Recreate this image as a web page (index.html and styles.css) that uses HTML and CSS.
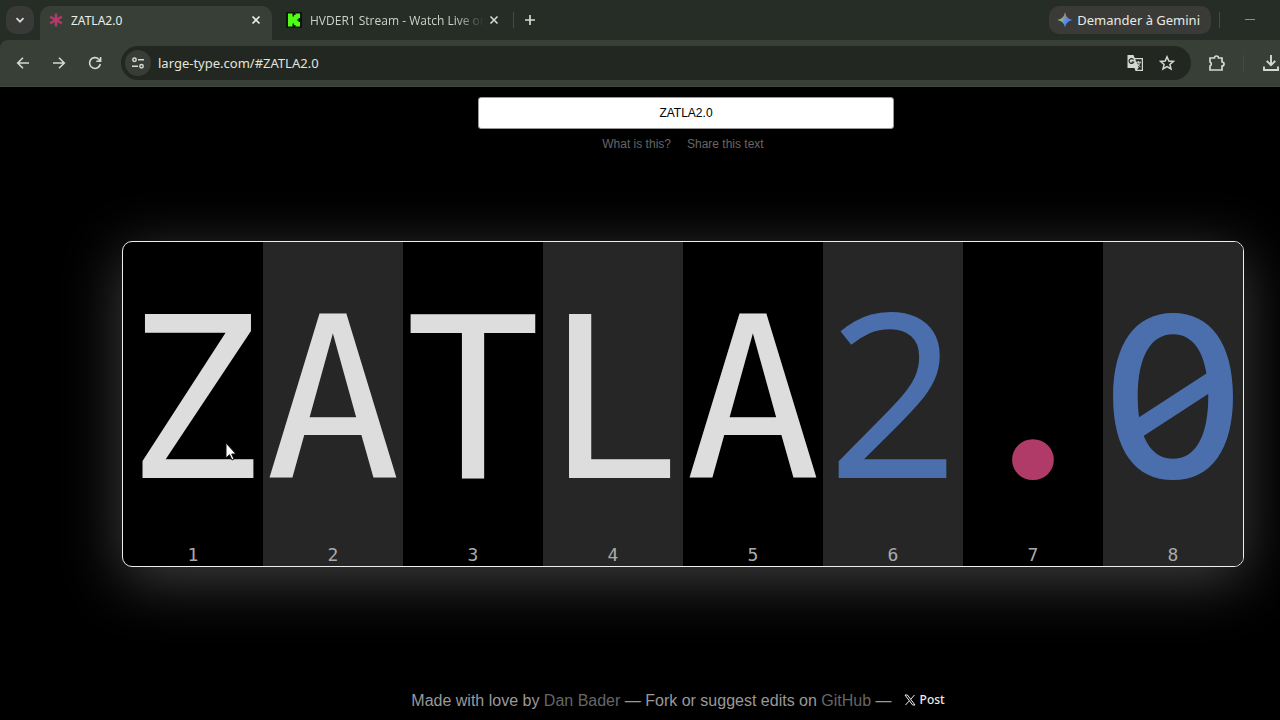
FILE: index.html
```html
<!DOCTYPE html>
<html lang="en">
<head>
<meta charset="utf-8">
<title>ZATLA2.0</title>
<link rel="stylesheet" href="styles.css">
</head>
<body>
<header class="browser">
  <div class="tabstrip">
    <button class="tab-search" aria-label="Search tabs"><svg width="12" height="12" viewBox="0 0 12 12"><path d="M2.5 4.2 6 7.7l3.500-3.500" fill="none" stroke="currentColor" stroke-width="1.800"/></svg></button>
    <div class="tab tab-active">
      <svg class="favicon" width="16" height="16" viewBox="0 0 16 16"><path d="M8 1.500v13M2.200 4.700l11.600 6.600M13.800 4.700 2.200 11.300" stroke="#b43a6c" stroke-width="2.400"/></svg>
      <span class="tab-title">ZATLA2.0</span>
      <button class="close" aria-label="Close tab"><svg width="10" height="10" viewBox="0 0 10 10"><path d="m1.500 1.500 7 7m0-7-7 7" stroke="currentColor" stroke-width="1.600"/></svg></button>
    </div>
    <div class="tab tab-idle">
      <svg class="favicon" width="16" height="16" viewBox="0 0 16 16"><path fill="#071807" d="M0 0h16v16H0z"/><path fill="#53fc18" d="M2 1.500h4.500v3H8V3h1.500V1.500H14V6h-1.500v1.500H11v1h1.500V10H14v4.500H9.500V13H8v-1.500H6.500v3H2z"/></svg>
      <span class="tab-title fade">HVDER1 Stream - Watch Live on</span>
      <button class="close" aria-label="Close tab"><svg width="10" height="10" viewBox="0 0 10 10"><path d="m1.500 1.500 7 7m0-7-7 7" stroke="currentColor" stroke-width="1.600"/></svg></button>
    </div>
    <span class="rule"></span>
    <button class="new-tab" aria-label="New tab"><svg width="12" height="12" viewBox="0 0 12 12"><path d="M6 1v10M1 6h10" stroke="currentColor" stroke-width="1.700"/></svg></button>
    <button class="gemini">
      <svg width="16" height="16" viewBox="0 0 16 16"><defs><linearGradient id="spark" x1="0" y1="0.200" x2="1" y2="0.600"><stop offset="0.100" stop-color="#e8bd4a"/><stop offset="0.350" stop-color="#79b88c"/><stop offset="0.600" stop-color="#5a86ee"/><stop offset="1" stop-color="#4c7df0"/></linearGradient><linearGradient id="warm" x1="0" y1="0" x2="0" y2="1"><stop offset="0" stop-color="#ef5b50"/><stop offset="0.450" stop-color="#ef5b50" stop-opacity="0"/></linearGradient></defs><path fill="url(#spark)" d="M8 .5C9 5 11 7 15.500 8 11 9 9 11 8 15.500 7 11 5 9 .5 8 5 7 7 5 8 .5z"/><path fill="url(#warm)" d="M8 .5C9 5 11 7 15.500 8 11 9 9 11 8 15.500 7 11 5 9 .5 8 5 7 7 5 8 .5z"/></svg>
      Demander à Gemini
    </button>
    <span class="rule"></span>
    <button class="minimize" aria-label="Minimize"><svg width="12" height="12" viewBox="0 0 12 12"><path d="M1 5.500h10" stroke="currentColor"/></svg></button>
  </div>
  <div class="toolbar">
    <button class="tool" aria-label="Back"><svg width="16" height="16" viewBox="0 0 16 16"><path d="M14 8H3M8 2.700 2.700 8 8 13.300" fill="none" stroke="currentColor" stroke-width="1.600"/></svg></button>
    <button class="tool" aria-label="Forward"><svg width="16" height="16" viewBox="0 0 16 16"><path d="M2 8h11M8 2.700 13.300 8 8 13.300" fill="none" stroke="currentColor" stroke-width="1.600"/></svg></button>
    <button class="tool" aria-label="Reload"><svg width="16" height="16" viewBox="0 0 16 16"><path d="M13.300 9a5.400 5.400 0 1 1-1.500-4.800L13.500 6M13.600 2v4.300H9.300" fill="none" stroke="currentColor" stroke-width="1.600"/></svg></button>
    <div class="omnibox">
      <button class="site-info" aria-label="Site information"><svg width="14" height="14" viewBox="0 0 14 14"><g fill="none" stroke="currentColor" stroke-width="1.500"><circle cx="3.500" cy="3.800" r="1.700"/><path d="M7 3.800h6M1 10.200h6"/><circle cx="10.500" cy="10.200" r="1.700"/></g></svg></button>
      <input class="address" type="text" value="large-type.com/#ZATLA2.0" aria-label="Address">
      <button class="box-tool" aria-label="Translate this page"><svg width="18" height="18" viewBox="0 0 18 18"><path fill="currentColor" d="M1.500 1h6l1.200 3H17v13H9.500l-1-3h-7z"/><path fill="#222821" d="M9.200 5.200h6.600v10.600h-5l2-2-3.600-8.600z"/><path d="M7.500 5.700A2.400 2.400 0 1 0 7.700 8H5.500" fill="none" stroke="#222821" stroke-width="1.200"/><path d="M9.800 8.200h5.400M12.400 7v1.200c0 2-1.200 3.300-2 4M11 9.500l3.500 3.700M14.200 8.300c-.3 1.700-1.200 3-2.500 4" fill="none" stroke="currentColor"/></svg></button>
      <button class="box-tool" aria-label="Bookmark this page"><svg width="16" height="16" viewBox="0 0 16 16"><path d="m8 1.800 1.800 4.200 4.600.4-3.500 3 1.100 4.500-4-2.400-4 2.400 1.100-4.500-3.500-3L6.200 6z" fill="none" stroke="currentColor" stroke-width="1.500"/></svg></button>
    </div>
    <button class="tool extensions" aria-label="Extensions"><svg width="18" height="18" viewBox="0 0 18 18"><path d="M2 4h4.500a2 2 0 0 1 4 0H14v4a2 2 0 0 1 0 4v4H2v-4a2.200 2.200 0 0 0 0-4z" fill="none" stroke="currentColor" stroke-width="1.700"/></svg></button>
    <span class="rule"></span>
    <button class="download" aria-label="Downloads"><svg width="18" height="18" viewBox="0 0 18 18"><path d="M9 1v10M4.700 6.800 9 11.200l4.300-4.400M2 12.500V16h14v-3.500" fill="none" stroke="currentColor" stroke-width="1.900"/></svg></button>
  </div>
</header>
<div class="page">
  <form class="search">
    <input class="text-input" type="text" value="ZATLA2.0" aria-label="Text to display">
    <nav class="links"><a href="#about">What is this?</a><a href="#share">Share this text</a></nav>
  </form>
  <main class="stage">
    <ol class="chars">
      <li class="cell"><span class="char">Z</span><span class="num">1</span></li>
      <li class="cell"><span class="char">A</span><span class="num">2</span></li>
      <li class="cell"><span class="char">T</span><span class="num">3</span></li>
      <li class="cell"><span class="char">L</span><span class="num">4</span></li>
      <li class="cell"><span class="char">A</span><span class="num">5</span></li>
      <li class="cell"><span class="char digit"><span class="two">2</span></span><span class="num">6</span></li>
      <li class="cell"><span class="char symbol"><span class="dot">.</span></span><span class="num">7</span></li>
      <li class="cell"><span class="char digit slashed"><span class="zero">0</span></span><span class="num">8</span></li>
    </ol>
  </main>
  <footer class="footer">
    <p class="credit">Made with love by <a href="#author">Dan Bader</a> — Fork or suggest edits on <a href="#github">GitHub</a> —</p>
    <a class="post" href="#post"><svg width="12" height="12" viewBox="0 0 12 12"><path d="M1 1h2.400L11 11H8.600zM10.500 1 6.700 5.300M5.300 6.900 1.500 11" fill="none" stroke="currentColor"/></svg>Post</a>
  </footer>
</div>
<svg class="cursor" width="13" height="20" viewBox="0 0 13 20"><path d="M1 1v15l3.500-3.300L7 18l2-1-2.300-5H11z" fill="#fff" stroke="#111"/></svg>
</body>
</html>
```
FILE: styles.css
```css
* { box-sizing: border-box; }
body {
  margin: 0;
  min-height: 100vh;
  display: flex;
  flex-direction: column;
  overflow: hidden;
  background: #000;
  font-family: "Liberation Sans", Arial, sans-serif;
}
button { border: 0; padding: 0; background: none; color: inherit; font: inherit; display: flex; align-items: center; justify-content: center; flex: none; }
svg { flex: none; display: block; }

.browser { background: #262c26; color: #d5dad0; font: 12px "Noto Sans", sans-serif; }
.tabstrip { height: 40px; display: flex; align-items: center; padding: 0 24px 0 6px; }
.tab-search { width: 28px; height: 28px; border-radius: 10px; background: #383a37; }
.tab { height: 34px; align-self: flex-end; display: flex; align-items: center; gap: 7px; padding-bottom: 6px; }
.tab-active { width: 232px; margin-left: 6px; padding-left: 8px; padding-right: 10px; border-radius: 10px 10px 0 0; background: #383f36; color: #eceee8; }
.tab-idle { width: 237px; padding-left: 14px; padding-right: 9px; gap: 8px; }
.tab-title { flex: 1; min-width: 0; overflow: hidden; white-space: nowrap; }
.fade { font-family: "Open Sans", sans-serif; color: #cdd1c9; mask-image: linear-gradient(to right, #000 84%, transparent); }
.close { width: 12px; height: 16px; }
.tab-idle .close { margin-left: -4px; }
.rule { flex: none; width: 1px; height: 16px; background: #454b42; }
.tabstrip > .rule { margin-left: 4px; }
.new-tab { width: 32px; height: 28px; }
.gemini { margin-left: auto; height: 28px; padding: 0 11px 0 8px; gap: 4px; border-radius: 10px; background: #3a3b38; color: #e8eae5; font-size: 13px; }
.tabstrip > .gemini + .rule { margin-left: 8px; }
.minimize { width: 12px; height: 28px; margin-left: 24px; color: #8a8f86; }

.toolbar { height: 47px; display: flex; align-items: center; padding-left: 5px; background: #383f36; border-bottom: 1px solid #41463f; border-radius: 8px 0 0 0; }
.tool { width: 36px; height: 34px; }
.omnibox { flex: 1; min-width: 0; height: 34px; margin-left: 8px; padding: 0 14px 0 4px; display: flex; align-items: center; border-radius: 17px; background: #222821; }
.site-info { width: 26px; height: 26px; border-radius: 13px; background: #383e37; }
.address { flex: 1; min-width: 0; margin-left: 7px; padding: 0; border: 0; outline: 0; background: none; color: #e2e5dd; font: 13px "Noto Sans", sans-serif; }
.box-tool { width: 20px; height: 28px; margin-left: 12px; }
.extensions { margin-left: 8px; }
.toolbar > .rule { margin-left: 8px; }
.download { width: 18px; height: 34px; margin-left: 18px; }

.page { flex: 1; display: flex; flex-direction: column; padding-left: 86px; }
.search { display: flex; flex-direction: column; align-items: center; padding: 10px 0 0 6px; }
.text-input { width: 416px; max-width: 100%; height: 32px; padding: 0; border: 1px solid #999; border-radius: 3px; background: #fff; color: #000; text-align: center; font: 12px "Liberation Sans", Arial, sans-serif; outline: 0; }
.links { display: flex; gap: 16px; margin-top: 7px; padding-right: 6px; font-size: 12px; line-height: 16px; }
.links a, .credit a { color: #666; text-decoration: none; }
.stage { padding: 89px 36px 0; }
.chars { display: flex; margin: 0; padding: 0; list-style: none; border: 1px solid #eee; border-radius: 10px; overflow: hidden; background: #000; box-shadow: 0 13px 60px rgba(255, 255, 255, 0.25); font-family: "DejaVu Sans Mono", monospace; }
.cell { flex: 1; min-width: 0; display: flex; flex-direction: column; align-items: center; padding: 12px 0 4px; }
.cell:nth-child(even) { background: #262626; }
.char { font-size: 224px; line-height: 294px; color: #ddd; }
.digit { color: #4a6fac; }
.symbol { color: #b03a68; }
.two, .dot, .zero { line-height: 0; }
.two { font-family: "Noto Sans", sans-serif; font-size: 228px; }
.dot { font-family: Lato, sans-serif; font-weight: 900; font-size: 256px; }
.zero { font-family: Inter, sans-serif; font-weight: 500; }
.slashed { position: relative; }
.slashed::after { content: ""; position: absolute; left: 50%; top: 50%; width: 94px; height: 18px; margin: -4px 0 0 -47px; background: currentColor; transform: rotate(-33deg); }
.num { font-size: 18px; line-height: 14px; color: #aaa; }
.footer { margin-top: auto; display: flex; align-items: center; justify-content: center; gap: 12px; padding: 0 10px 9px 0; }
.credit { margin: 0; color: #999; font-size: 16px; line-height: 20px; }
.post { display: flex; align-items: center; gap: 4px; margin-bottom: 3px; color: #eee; font: 500 12px/16px "Noto Sans", sans-serif; text-decoration: none; }
.cursor { position: absolute; left: 225px; top: 442px; }
```
